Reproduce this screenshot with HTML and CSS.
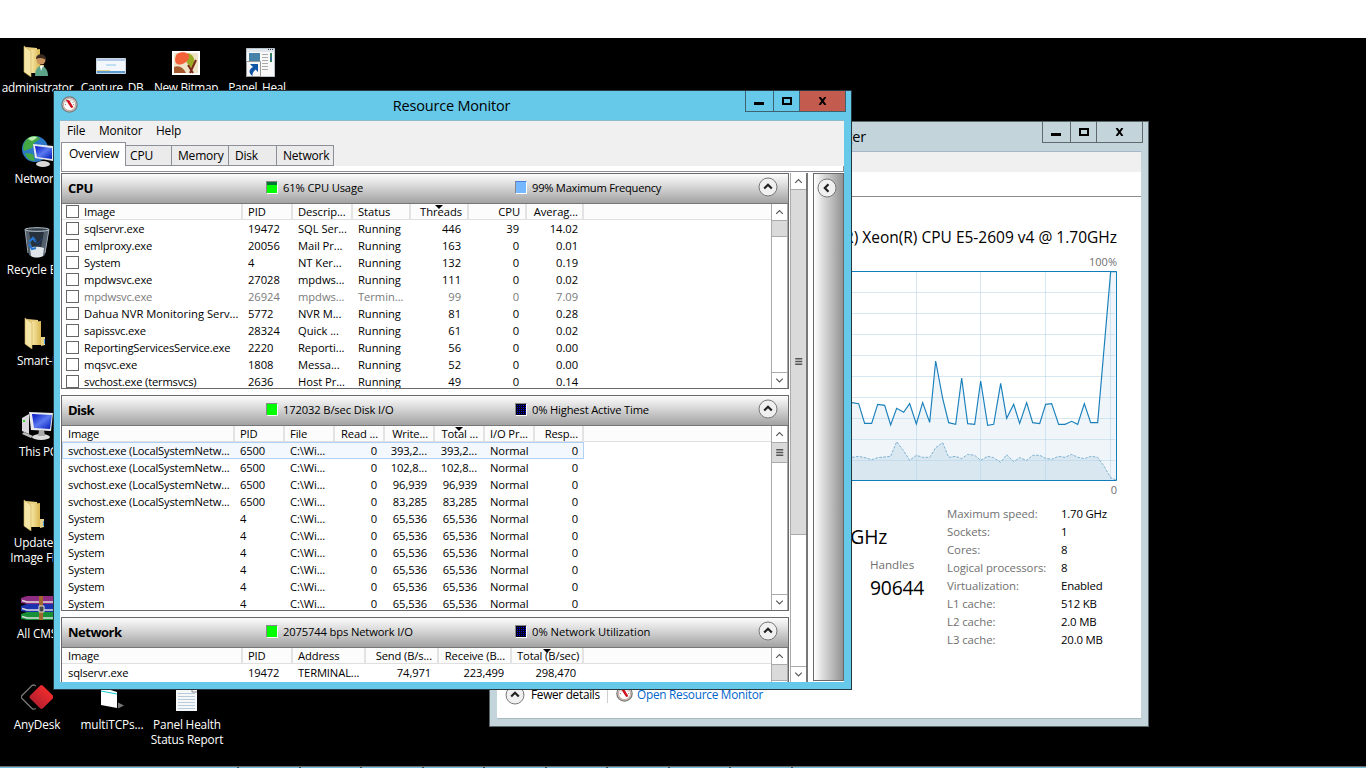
FILE: index.html
```html
<!DOCTYPE html>
<html lang="en">
<head>
<meta charset="utf-8">
<title>Resource Monitor</title>
<link rel="stylesheet" href="styles.css">
</head>
<body>
<svg width="0" height="0" class="defs">
  <defs>
    <linearGradient id="gold" x1="0" x2="1"><stop offset="0" stop-color="#f7e7a6"/><stop offset="1" stop-color="#d9b752"/></linearGradient>
    <linearGradient id="scr" x1="0" y1="0" x2="1" y2="1"><stop offset="0" stop-color="#0010c0"/><stop offset=".5" stop-color="#5a7af0"/><stop offset="1" stop-color="#0018b8"/></linearGradient>
    <linearGradient id="red" x1="0" y1="0" x2="0" y2="1"><stop offset="0" stop-color="#ef2b2d"/><stop offset="1" stop-color="#b8202e"/></linearGradient>
    <symbol id="folder" viewBox="0 0 32 32"><path d="M7 2l11 1 1 22-8 3z" fill="#e9cf7e"/><path d="M12 5l9-1v24h-9z" fill="url(#gold)"/><path d="M2 1l7 5v26l-7-5z" transform="translate(3)" fill="#f5e6a8" stroke="#c9a94e" stroke-width=".6"/><path d="M21 20h4v8l-4 1z" fill="#e6cf86"/><path d="M24.500 22v5" stroke="#4fa0d8"/></symbol>
    <symbol id="gauge" viewBox="0 0 16 16"><circle cx="8" cy="8" r="7.200" fill="#ddd" stroke="#777" stroke-width="1.200"/><circle cx="8" cy="8" r="5.700" fill="#fff" stroke="#c5a99c" stroke-width="1"/><path d="M4 8.500l.8-3L8 4l3.200 1.500.8 3" fill="none" stroke="#888" stroke-dasharray="1 1.500"/><path d="M4.500 3.500l3.200.5 4 6.500-2.200.8z" fill="#d0101a"/></symbol>
    <symbol id="roundUp" viewBox="0 0 20 20"><circle cx="10" cy="10" r="9" fill="#f0f0f0" stroke="#777"/><path d="M6.200 11.500L10 7.800l3.800 3.700" fill="none" stroke="#222" stroke-width="2.200"/></symbol>
    <symbol id="up" viewBox="0 0 16 16"><path d="M4.500 10L8 6.500l3.500 3.500" fill="none" stroke="#555" stroke-width="1.200"/></symbol>
    <symbol id="down" viewBox="0 0 16 16"><path d="M4.500 6L8 9.500 11.500 6" fill="none" stroke="#555" stroke-width="1.200"/></symbol>
    <symbol id="grip" viewBox="0 0 16 16"><path d="M4.500 4.500h7.500M4.500 7.500h7.500M4.500 10.500h7.500" stroke="#555" stroke-width="1.600"/></symbol>
  </defs>
</svg>
<div class="desktop">
  <div class="shortcut s-admin"><svg viewBox="0 0 32 32"><use href="#folder"/><circle cx="22" cy="15" r="4.500" fill="#c9945e"/><path d="M17 14c0-7 11-6 10 1-3-2-6-3-10-1z" fill="#3b2a20"/><path d="M16 31c0-7 3-10 6-10s7 3 7 10z" fill="#5da58a"/><path d="M21 21l1 5 2-5z" fill="#fff"/></svg><span>administrator</span></div>
  <div class="shortcut s-cap"><svg viewBox="0 0 32 32"><path fill="#f3f7fb" stroke="#c9d5e0" d="M1.500 11.500h29v15h-29z"/><path fill="#b4c8e8" d="M2 12h28v2H2z"/><path fill="#bfe0f0" d="M11 17h10v2H11z"/><path fill="#5b9bd0" d="M2 24h28v2H2z"/><path fill="#e8d58c" d="M2 23h13v1H2z"/></svg><span>Capture_DB</span></div>
  <div class="shortcut s-bmp"><svg viewBox="0 0 32 32"><path fill="#fff" d="M2 4h28v24H2z"/><path fill="#efe3c8" d="M4 6h24v20H4z"/><path fill="#a5592f" d="M4 26V20c5-2 9 0 12 6z"/><path fill="#9cab25" d="M18 6c6 2 9 9 4 15-3-2-6-6-6-8z"/><path fill="#f4623a" d="M7 7c4-3 13-2 12 3-1 6-9 9-12 7-3-2-2-8 0-10z"/><path fill="none" stroke="#7a2a18" stroke-width="2" d="M26 13l-6 13M18 18l5 8"/></svg><span>New Bitmap</span></div>
  <div class="shortcut s-panel"><svg viewBox="0 0 32 32"><path fill="#f8f8f8" stroke="#b9c3cc" d="M2.500 1.500h28v28h-28z"/><path fill="#dfe6ec" d="M3 2h27v3H3z"/><path fill="#334" d="M24 2h1v1h-1zM26 2h1v1h-1zM28 2h1v1h-1z"/><path fill="#4682a8" d="M5 6h11v8H5z"/><path stroke="#aaa" d="M18 7.500h6M18 10.500h6M18 13.500h6M18 16.500h6M18 19.500h6M18 22.500h6"/><path fill="#33805c" d="M26 6h2v9h-2z"/><path fill="#3566a0" d="M26 10h2v3h-2z"/><path fill="#f6f6f6" stroke="#999" d="M2.500 14.500h14v15h-14z"/><path fill="#0e55a5" d="M6 17h8v8l-2.500-2.500C9 25 8.500 26 8.500 29 4 26 5 22 9 20z"/></svg><span>Panel_Heal</span></div>
  <div class="shortcut s-net"><svg viewBox="0 0 32 32"><circle cx="14" cy="14" r="13" fill="#2b78c8"/><path d="M5 5c5-6 13-4 14-1l-6 4-2 5-8 3c-2-4 0-8 2-11zM4 18l8 1 2 7c-5 0-9-3-10-8z" fill="#43a843"/><path d="M7 4c3-3 8-3 9-1l-5 3z" fill="#bcebb0"/><path d="M12 9l20 2v15l-18-3z" fill="#e8e8ee"/><path d="M14 11l17 2v11l-15-2z" fill="url(#scr)"/><ellipse cx="22" cy="29" rx="7" ry="3" fill="#d8d8d8"/></svg><span>Network</span></div>
  <div class="shortcut s-bin"><svg viewBox="0 0 32 32"><path d="M5 3h24l-4 26c-4 3-12 3-16 0z" fill="#53606b"/><path d="M9 6h15l-3 16H12z" fill="#26313d"/><path d="M10 22c4-2 10-1 14 0l-1 8c-4 2-9 2-12 0z" fill="#dfe4e8"/><path d="M5 3l3 24M29 3l-4 24" stroke="#9daab4" fill="none"/><ellipse cx="17" cy="3.500" rx="12" ry="1.800" fill="#313d48" stroke="#bac6ce"/><path d="M9 16l4-4 3 4M9 18l3 5 4-1" stroke="#2476d0" stroke-width="2.200" fill="none"/><path d="M17 18l6-6M15 14l5 6" stroke="#1b3f78" fill="none"/></svg><span>Recycle Bin</span></div>
  <div class="shortcut s-smart"><svg><use href="#folder"/></svg><span>Smart-P</span></div>
  <div class="shortcut s-pc"><svg viewBox="0 0 32 32"><path d="M1 7l7-4v20l-7-3z" fill="#d9d9de"/><path d="M2 9h2v2H2z" fill="#3bd42b"/><path d="M8 1l24 1-2 18-20-1z" fill="#e9e9ef"/><path d="M11 3l20 1-2 14-16-1z" fill="url(#scr)"/><ellipse cx="20" cy="26" rx="9" ry="3" fill="#dcdcdc"/><path d="M18 19h5l1 6h-7z" fill="#aaa"/><path d="M3 21l9 4-2 2-9-4z" fill="#bbb"/></svg><span>This PC</span></div>
  <div class="shortcut s-upd"><svg><use href="#folder"/></svg><span>Updated<br>Image File</span></div>
  <div class="shortcut s-rar"><svg viewBox="0 0 32 32"><path d="M0 4l6-2h26v8H6l-6-1z" fill="#8f2d82"/><path d="M0 12l6-2h26v8H6l-6-1z" fill="#1c33b0"/><path d="M0 20l6-2h26v8H6l-6-1z" fill="#189038"/><path d="M1 6.500l5 1.500h26M1 14.500l5 1.500h26M1 22.500l5 1.500h26" fill="none" stroke="#ddd" stroke-width="1.500"/><path d="M18 2h4v24h-4z" fill="#a0682e"/><path d="M18 12h5v6h-5z" fill="#444" stroke="#ddd"/></svg><span>All CMS</span></div>
  <div class="shortcut s-any"><svg viewBox="0 0 32 32"><path d="M15 5l-2-1c-1 0-1.500 0-2 .5L1 14.500c-1 1-1 2 0 3l10 10c1 1 2 1 4 0" fill="none" stroke="#777" stroke-width="1.300"/><rect x="11.500" y="7" width="18" height="18" rx="2" transform="rotate(45 20.500 16)" fill="url(#red)"/></svg><span>AnyDesk</span></div>
  <div class="shortcut s-tcp"><svg viewBox="0 0 32 32"><path d="M6 2l16 5v16L6 20z" fill="#fff"/><path d="M6 6l16 3" stroke="#11c8d0"/><path d="M23 17.500l6 3-6 3z" fill="#777"/></svg><span>multiTCPs...</span></div>
  <div class="shortcut s-rep"><svg viewBox="0 0 32 32"><path d="M6 1h17l4 4v22H6z" fill="#f5f7f8"/><path d="M22 4v4h5" stroke="#888" fill="none"/><path d="M8 9.500h17M8 12.500h17M8 15.500h17M8 18.500h17M8 21.500h17M8 24.500h17" stroke="#b7cbda"/></svg><span>Panel Health<br>Status Report</span></div>

  <section class="window task-manager">
    <header class="titlebar"><h1>Task Manager</h1>
      <div class="controls"><b class="min"><i></i></b><b class="max"><i></i></b><b class="close"><svg viewBox="0 0 9 8"><path d="M1.500 0l6 8M7.500 0l-6 8" stroke="#000" stroke-width="2"/></svg></b></div></header>
    <div class="tm-body">
      <div class="tm-menu"></div><div class="tm-tabs"></div>
      <div class="tm-main">
        <div class="cpu-name">Intel(R) Xeon(R) CPU E5-2609 v4 @ 1.70GHz</div>
        <div class="axis top">100%</div>
        <svg class="chart" viewBox="21 -57 795 630">
          <path fill="#fff" d="M21-57h795v630H21z"/>
          <path fill="#f0f5fa" d="M21 338 41 341 59 400 80 400 98 343 119 346 137 405 155 355 176 367 194 341 214 402 233 338 254 397 272 213 293 325 311 398 332 403 350 264 368 401 389 403 407 273 428 406 446 403 467 280 485 385 506 343 524 400 545 338 563 398 584 401 602 343 620 341 641 403 660 403 680 394 698 403 718 341 737 398 758 398 797-55 814-55V571H21z"/>
          <path fill="#d9e7f0" d="M21 502 41 499 60 503 80 509 98 503 137 499 155 455 175 481 194 511 214 496 233 502 254 502 272 473 293 458 311 502 332 499 350 506 368 493 389 496 407 511 428 499 446 503 467 517 485 494 506 515 524 503 545 511 563 496 584 496 602 505 620 508 641 499 660 502 680 493 698 502 718 506 737 499 758 502 776 527 797 563 814 570H21z"/>
          <path fill="none" stroke="#b0d2e8" stroke-opacity=".5" stroke-width="3" d="M214.500-57v628M406.500-57v628M601.500-57v628M796.500-57v628M21 7.500h790M21 70.500h790M21 133.500h790M21 196.500h790M21 259.500h790M21 322.500h790M21 385.500h790M21 448.500h790M21 511.500h790"/>
          <path fill="none" stroke="#7fb3d2" stroke-width="3" stroke-dasharray="8 4" d="M21 502 41 499 60 503 80 509 98 503 137 499 155 455 175 481 194 511 214 496 233 502 254 502 272 473 293 458 311 502 332 499 350 506 368 493 389 496 407 511 428 499 446 503 467 517 485 494 506 515 524 503 545 511 563 496 584 496 602 505 620 508 641 499 660 502 680 493 698 502 718 506 737 499 758 502 776 527 797 563 814 570"/>
          <path fill="none" stroke="#1a80bb" stroke-width="3.500" d="M21 338 41 341 59 400 80 400 98 343 119 346 137 405 155 355 176 367 194 341 214 402 233 338 254 397 272 213 293 325 311 398 332 403 350 264 368 401 389 403 407 273 428 406 446 403 467 280 485 385 506 343 524 400 545 338 563 398 584 401 602 343 620 341 641 403 660 403 680 394 698 403 718 341 737 398 758 398 797-55 814-55"/>
          <path fill="none" stroke="#117dbb" stroke-width="3" d="M21-55.500h793.500v627H21"/>
        </svg>
        <div class="axis bottom">0</div>
        <div class="stats">
          <div class="usage"><div class="big speed">1.64 GHz</div><div class="label">Handles</div><div class="big">90644</div></div>
          <dl><dt>Maximum speed:</dt><dd>1.70 GHz</dd><dt>Sockets:</dt><dd>1</dd><dt>Cores:</dt><dd>8</dd><dt>Logical processors:</dt><dd>8</dd><dt>Virtualization:</dt><dd>Enabled</dd><dt>L1 cache:</dt><dd>512 KB</dd><dt>L2 cache:</dt><dd>2.0 MB</dd><dt>L3 cache:</dt><dd>20.0 MB</dd></dl>
        </div>
      </div>
      <footer><svg class="fewer"><use href="#roundUp"/></svg><span class="fd">Fewer details</span><i></i><svg class="gauge"><use href="#gauge"/></svg><a>Open Resource Monitor</a></footer>
    </div>
  </section>

  <section class="window resource-monitor">
    <header class="titlebar"><svg class="gauge"><use href="#gauge"/></svg><h1>Resource Monitor</h1>
      <div class="controls"><b class="min"><i></i></b><b class="max"><i></i></b><b class="close"><svg viewBox="0 0 9 8"><path d="M1.500 0l6 8M7.500 0l-6 8" stroke="#000" stroke-width="2"/></svg></b></div></header>
    <div class="rm-body">
      <nav class="menu"><span class="m1">File</span><span class="m2">Monitor</span><span>Help</span></nav>
      <nav class="tabs"><span class="t1 active">Overview</span><span class="t2">CPU</span><span class="t3">Memory</span><span class="t4">Disk</span><span class="t5">Network</span></nav>
      <div class="tab-edge"></div>
      <div class="rm-main">
        <div class="panels">
          <section class="panel p-cpu">
            <header><h2>CPU</h2><span class="m green part"></span><span class="a">61% CPU Usage</span><span class="m freq"></span><span class="b">99% Maximum Frequency</span><svg class="chev"><use href="#roundUp"/></svg></header>
            <div class="table">
              <div class="rows">
                <div class="row head"><span><i class="cb"></i>Image</span><span>PID</span><span>Descrip...</span><span>Status</span><span class="sort">Threads</span><span>CPU</span><span>Averag...</span></div>
                <div class="row"><span><i class="cb"></i>sqlservr.exe</span><span>19472</span><span>SQL Ser...</span><span>Running</span><span>446</span><span>39</span><span>14.02</span></div>
                <div class="row"><span><i class="cb"></i>emlproxy.exe</span><span>20056</span><span>Mail Pr...</span><span>Running</span><span>163</span><span>0</span><span>0.01</span></div>
                <div class="row"><span><i class="cb"></i>System</span><span>4</span><span>NT Ker...</span><span>Running</span><span>132</span><span>0</span><span>0.19</span></div>
                <div class="row"><span><i class="cb"></i>mpdwsvc.exe</span><span>27028</span><span>mpdws...</span><span>Running</span><span>111</span><span>0</span><span>0.02</span></div>
                <div class="row ended"><span><i class="cb"></i>mpdwsvc.exe</span><span>26924</span><span>mpdws...</span><span>Termin...</span><span>99</span><span>0</span><span>7.09</span></div>
                <div class="row"><span class="wide"><i class="cb"></i>Dahua NVR Monitoring Serv...</span><span>5772</span><span>NVR M...</span><span>Running</span><span>81</span><span>0</span><span>0.28</span></div>
                <div class="row"><span><i class="cb"></i>sapissvc.exe</span><span>28324</span><span>Quick ...</span><span>Running</span><span>61</span><span>0</span><span>0.02</span></div>
                <div class="row"><span><i class="cb"></i>ReportingServicesService.exe</span><span>2220</span><span>Reporti...</span><span>Running</span><span>56</span><span>0</span><span>0.00</span></div>
                <div class="row"><span><i class="cb"></i>mqsvc.exe</span><span>1808</span><span>Messa...</span><span>Running</span><span>52</span><span>0</span><span>0.00</span></div>
                <div class="row"><span><i class="cb"></i>svchost.exe (termsvcs)</span><span>2636</span><span>Host Pr...</span><span>Running</span><span>49</span><span>0</span><span>0.14</span></div>
              </div>
              <div class="scroll"><svg><use href="#up"/></svg><div class="thumb"></div><svg class="dn"><use href="#down"/></svg></div>
            </div>
          </section>
          <section class="panel p-disk">
            <header><h2>Disk</h2><span class="m green"></span><span class="a">172032 B/sec Disk I/O</span><span class="m idle"></span><span class="b">0% Highest Active Time</span><svg class="chev"><use href="#roundUp"/></svg></header>
            <div class="table">
              <div class="rows">
                <div class="row head"><span>Image</span><span>PID</span><span>File</span><span>Read ...</span><span>Write...</span><span class="sort">Total ...</span><span>I/O Pr...</span><span>Resp...</span></div>
                <div class="row sel"><span>svchost.exe (LocalSystemNetw...</span><span>6500</span><span>C:\Wi...</span><span>0</span><span>393,2...</span><span>393,2...</span><span>Normal</span><span>0</span></div>
                <div class="row"><span>svchost.exe (LocalSystemNetw...</span><span>6500</span><span>C:\Wi...</span><span>0</span><span>102,8...</span><span>102,8...</span><span>Normal</span><span>0</span></div>
                <div class="row"><span>svchost.exe (LocalSystemNetw...</span><span>6500</span><span>C:\Wi...</span><span>0</span><span>96,939</span><span>96,939</span><span>Normal</span><span>0</span></div>
                <div class="row"><span>svchost.exe (LocalSystemNetw...</span><span>6500</span><span>C:\Wi...</span><span>0</span><span>83,285</span><span>83,285</span><span>Normal</span><span>0</span></div>
                <div class="row"><span>System</span><span>4</span><span>C:\Wi...</span><span>0</span><span>65,536</span><span>65,536</span><span>Normal</span><span>0</span></div>
                <div class="row"><span>System</span><span>4</span><span>C:\Wi...</span><span>0</span><span>65,536</span><span>65,536</span><span>Normal</span><span>0</span></div>
                <div class="row"><span>System</span><span>4</span><span>C:\Wi...</span><span>0</span><span>65,536</span><span>65,536</span><span>Normal</span><span>0</span></div>
                <div class="row"><span>System</span><span>4</span><span>C:\Wi...</span><span>0</span><span>65,536</span><span>65,536</span><span>Normal</span><span>0</span></div>
                <div class="row"><span>System</span><span>4</span><span>C:\Wi...</span><span>0</span><span>65,536</span><span>65,536</span><span>Normal</span><span>0</span></div>
                <div class="row"><span>System</span><span>4</span><span>C:\Wi...</span><span>0</span><span>65,536</span><span>65,536</span><span>Normal</span><span>0</span></div>
              </div>
              <div class="scroll"><svg><use href="#up"/></svg><div class="thumb tall"><svg><use href="#grip"/></svg></div><svg class="dn"><use href="#down"/></svg></div>
            </div>
          </section>
          <section class="panel p-net">
            <header><h2>Network</h2><span class="m green"></span><span class="a">2075744 bps Network I/O</span><span class="m idle"></span><span class="b n">0% Network Utilization</span><svg class="chev"><use href="#roundUp"/></svg></header>
            <div class="table">
              <div class="rows">
                <div class="row head"><span>Image</span><span>PID</span><span>Address</span><span>Send (B/s...</span><span>Receive (B...</span><span class="sort">Total (B/sec)</span></div>
                <div class="row"><span>sqlservr.exe</span><span>19472</span><span>TERMINAL...</span><span>74,971</span><span>223,499</span><span>298,470</span></div>
              </div>
              <div class="scroll"><svg><use href="#up"/></svg><div class="thumb"></div></div>
            </div>
          </section>
        </div>
        <div class="scroll outer"><svg><use href="#up"/></svg><div class="thumb"><svg><use href="#grip"/></svg></div><svg class="dn"><use href="#down"/></svg></div>
        <aside><svg><use href="#roundUp" transform="rotate(-90 10 10)"/></svg></aside>
      </div>
    </div>
  </section>
  <div class="taskbar"><i></i><i></i><i></i><i></i><i></i><i></i><i></i><i></i><i></i><i></i></div>
</div>
</body>
</html>
```
FILE: styles.css
```css
* { box-sizing: border-box; }
body { margin: 0; width: 1366px; height: 768px; overflow: hidden; background: #fff; padding-top: 38px;
  font-family: "Open Sans", "Noto Sans", sans-serif; font-size: 11px; color: #000; }
h1, h2, dl, dd { margin: 0; font-weight: normal; }
.defs { position: absolute; }
svg { display: block; flex: none; }
.desktop { position: relative; height: 730px; background: #000; overflow: hidden; }

/* desktop shortcuts */
.shortcut { position: absolute; width: 90px; display: flex; flex-direction: column; align-items: center; color: #fff; text-align: center; white-space: nowrap; font-size: 11.800px; line-height: 15px; letter-spacing: -.3px; }
.shortcut svg { width: 32px; height: 32px; margin-bottom: 10px; }
.s-admin { left: -8px; top: 7px; } .s-admin svg { margin-bottom: 3px; margin-left: -5px; }
.s-admin span { margin-left: 1px; }
.s-cap { left: 67px; top: 9px; } .s-cap svg, .s-bmp svg, .s-panel svg { margin-bottom: 1px; }
.s-cap svg { margin-left: -3px; }
.s-bmp { left: 141px; top: 9px; }
.s-panel { left: 212px; top: 9px; } .s-panel svg { margin-left: 5px; }
.s-net { left: -8px; top: 97px; } .s-net svg { margin-bottom: 4px; }
.s-bin { left: -8px; top: 188px; letter-spacing: -.1px; } .s-bin svg { margin-bottom: 4px; margin-left: -2px; }
.s-smart { left: -7px; top: 279px; } .s-smart svg, .s-upd svg { margin-bottom: 4px; margin-left: -5px; }
.s-pc { left: -7px; top: 373px; } .s-pc svg { margin-bottom: 1px; margin-left: -2px; }
.s-upd { left: -8px; top: 461px; letter-spacing: -.2px; }
.s-rar { left: -8px; top: 556px; letter-spacing: -.15px; } .s-rar svg { margin-bottom: 0; }
.s-any { left: -8px; top: 643px; letter-spacing: -.15px; } .s-any svg { margin-bottom: 4px; }
.s-tcp { left: 67px; top: 647px; letter-spacing: -.1px; } .s-tcp svg { margin-bottom: 0; margin-left: -2px; }
.s-rep { left: 142px; top: 646px; letter-spacing: -.17px; } .s-rep svg { margin-bottom: 1px; margin-left: -2px; }

/* window frame */
.window { position: absolute; border: 1px solid #27373f; }
.titlebar { height: 30px; display: flex; position: relative; }
.titlebar h1 { font-size: 14.500px; line-height: 29px; white-space: nowrap; letter-spacing: -.2px; }
.controls { position: absolute; right: 5px; top: 0; display: flex; height: 21px; border: 1px solid #3d6270; border-top: 0; }
.controls b { display: flex; align-items: center; justify-content: center; border-left: 1px solid #3d6270; }
.controls b:first-child { border-left: 0; }
.min { width: 27px; } .max { width: 26px; } .close { width: 46px; }
.min i { width: 10px; height: 3px; background: #000; margin: 4px 2px 0 0; }
.max i { width: 10px; height: 8px; border: 2px solid #000; }
.close svg { width: 9px; height: 8px; }

/* task manager */
.task-manager { left: 489px; top: 83px; width: 660px; height: 606px; background: #c3d5db; border-color: #5b666b; }
.task-manager h1 { margin-left: 284px; }
.task-manager .controls, .task-manager .controls b { border-color: #5f686d; }
.tm-body { margin: -1px 7px 0; height: 568px; background: #fff; border-bottom: 1px solid #a9b9bf; border-top: 1px solid #a9b5ca; display: flex; flex-direction: column; }
.tm-menu { height: 20px; background: #f0f0f0; }
.tm-tabs { height: 25px; border-bottom: 1px solid #8b8b8b; }
.tm-main { flex: 1; display: flex; flex-direction: column; align-items: flex-end; padding-right: 23px; }
.cpu-name { margin-top: 30px; margin-right: 1px; font-size: 15.500px; line-height: 20px; height: 21px; white-space: nowrap; }
.axis { color: #707070; line-height: 14px; height: 14px; margin-right: 1px; }
.axis.top { margin-top: 7px; margin-bottom: 2px; }
.axis.bottom { margin-top: 2px; }
.chart { width: 265px; height: 210px; margin-right: 1px; }
.stats { width: 343px; display: flex; height: 150px; margin-top: 8px; margin-right: -23px; }
.usage { width: 151px; padding-left: 72px; padding-top: 20px; }
.big { font-size: 19.300px; line-height: 24px; white-space: nowrap; letter-spacing: -.2px; }
.speed { margin-left: -57px; width: 74px; display: flex; justify-content: flex-end; }
.label { color: #707070; line-height: 16px; margin: 8px 0 3px; font-size: 11.600px; }
.stats dl { display: grid; grid-template-columns: 114px 80px; grid-auto-rows: 18px; line-height: 18px; font-size: 11.400px; white-space: nowrap; }
.stats dt { color: #707070; letter-spacing: -.07px; }
.stats dd { letter-spacing: -.2px; }
.tm-body footer { height: 33px; display: flex; align-items: flex-start; padding-left: 8px; font-size: 11.800px; line-height: 19px; letter-spacing: -.28px; }
.fewer { width: 20px; height: 20px; } .fd { margin-left: 6px; width: 70px; white-space: nowrap; }
footer i { width: 1px; height: 18px; background: #d0d0d0; margin: 0 8px 0 6px; }
.gauge { width: 17px; height: 17px; }
footer a { color: #0066cc; margin-left: 4px; white-space: nowrap; letter-spacing: -.25px; }

/* resource monitor */
.resource-monitor { left: 53px; top: 52px; width: 799px; height: 600px; background: #66c9ea; }
.resource-monitor .titlebar { height: 29px; }
.resource-monitor h1 { width: 100%; text-align: center; margin-right: 2px; }
.resource-monitor .titlebar > .gauge { position: absolute; left: 7px; top: 5px; }
.resource-monitor .close { background: #c45b4f; }
.rm-body { margin: 0 7px 0 6px; height: 562px; background: #fff; overflow: hidden; display: flex; flex-direction: column; border-top: 1px solid #8fb9cc; }
.menu { height: 21px; background: #f0f0f0; display: flex; padding-left: 7px; font-size: 11.900px; line-height: 19px; letter-spacing: -.15px; flex: none; }
.m1 { width: 32px; } .m2 { width: 57px; }
.tabs { height: 24px; background: #f0f0f0; display: flex; align-items: flex-end; padding-left: 1px; font-size: 12px; flex: none; }
.tabs span { height: 21px; line-height: 20px; border: 1px solid #8c8e98; border-left: 0; background: #ebebeb; padding-left: 4px; letter-spacing: -.15px; }
.tabs .active { height: 24px; background: #fff; border-left: 1px solid #8c8e98; border-bottom: 0; padding-left: 7px; line-height: 21px; letter-spacing: -.25px; }
.tabs .t3, .tabs .t4, .tabs .t5 { padding-left: 6px; letter-spacing: -.2px; }
.t1 { width: 65px; } .t2 { width: 46px; } .t3 { width: 57px; } .t4 { width: 48px; } .t5 { width: 57px; }
.tab-edge { height: 6px; border: 1px solid #8c8e98; border-top: 0; margin-left: 1px; background: #fff; flex: none; }
.rm-main { display: flex; height: 510px; padding: 1px 0 0 1px; }
.panels { width: 728px; height: 509px; flex: none; overflow: hidden; }
.panel { border: 1px solid #696969; margin-bottom: 6px; display: flex; flex-direction: column; }
.p-cpu, .p-disk { height: 216px; } .p-net { height: 90px; }
.panel header { height: 30px; flex: none; display: flex; align-items: center; position: relative; background: linear-gradient(#fcfcfc, #e3e3e3 30%, #a2a2a2); border-bottom: 1px solid #777; padding: 0 0 2px 6px; font-size: 11.200px; letter-spacing: -.14px; }
.panel h2 { font-size: 13px; font-weight: bold; width: 198px; letter-spacing: -.5px; }
.m { width: 12px; height: 13px; border: 1px solid #888; border-color: #888 #fff #fff #888; margin: 0 5px 0 0; }
.green { background-color: #0f0; }
.part { background-image: linear-gradient(#073 3px, transparent 3px); }
.freq { background: #75b8ff; border-top-color: #4d7fdc; }
.idle { background: linear-gradient(#000030, #000030); }
.idle { background: radial-gradient(circle at .5px .5px, #0000e0 .6px, #000010 .7px) 1px 1px / 2px 2px; }
.a { width: 232px; white-space: nowrap; }
.b { letter-spacing: -.27px; }
.p-disk .b { letter-spacing: -.17px; } .p-net .b { letter-spacing: 0; }
.chev { position: absolute; right: 10px; top: 3px; width: 20px; height: 20px; }
.table { display: flex; flex: 1; min-height: 0; overflow: hidden; }
.rows { flex: 1; overflow: hidden; }
.row { display: grid; height: 17px; line-height: 17px; white-space: nowrap; width: 522px; font-size: 11.200px; letter-spacing: -.05px; }
.row span { padding: 0 8px 0 5px; overflow: hidden; }
.row span:nth-child(n+7) { padding-right: 6px; }
.row span:first-child { padding-left: 6px; padding-right: 0; letter-spacing: -.2px; }
.row .wide:first-child { letter-spacing: .02px; }
.row.head { width: 100%; height: 16px; line-height: 16px; border-bottom: 1px solid #e0e0e0; background: #fcfcfc; }
.row.head span { border-right: 2px solid #e3e3e3; padding-right: 5px; }
.row.head span:nth-child(n+7) { padding-right: 4px; }
.p-cpu .row { grid-template-columns: 181px 50px 60px 58px 58px 58px 57px; }
.p-disk .row { grid-template-columns: 173px 50px 50px 50px 50px 50px 50px 49px; letter-spacing: -.12px; }
.p-net .row { grid-template-columns: 181px 50px 73px 73px 73px 72px; letter-spacing: -.12px; }
.p-cpu .row span:nth-child(n+5), .p-disk .row span:nth-child(8), .p-disk .row span:nth-child(n+4):nth-child(-n+6), .p-net .row span:nth-child(n+4) { text-align: right; }
.p-cpu .row span:first-child { padding-left: 4px; display: flex; }
.cb { width: 13px; height: 13px; border: 1px solid #666; background: #fff; margin: 2px 5px 0 0; flex: none; }
.head .cb { margin-top: 1px; }
.ended { color: #7a7a7a; }
.sel { background: #f3f8ff; box-shadow: inset 0 0 0 1px #b0d0f5; }
.sort { position: relative; }
.sort::before { content: ""; position: absolute; left: calc(50% - 4px); top: 1px; border: 4px solid transparent; border-top-color: #000; border-bottom: 0; }
.scroll { width: 17px; background: #fff; border: 1px solid #aaa; border-width: 0 1px; display: flex; flex-direction: column; flex: none; }
.scroll svg { width: 15px; height: 16px; }
.thumb { height: 17px; background: #dadada; border: 1px solid #aaa; border-width: 1px 0; display: flex; align-items: center; }
.thumb.tall { height: 21px; }
.dn { margin-top: auto; border-top: 1px solid #aaa; }
.outer { margin-left: 1px; width: 18px; height: 509px; border-right: 2px solid #777; }
.outer .thumb { height: 346px; }
aside { margin-left: 5px; width: 31px; height: 508px; border: 1px solid #696969; background: linear-gradient(90deg, #fff, #ddd 30%, #929292); padding: 4px 0 0 3px; }
aside svg { width: 20px; height: 20px; }

/* taskbar edge */
.taskbar { position: absolute; left: 0; right: 0; bottom: 0; height: 2px; background: #70bddd; border-top: 1px solid #6c6c6c; display: flex; padding-left: 237px; }
.taskbar i { width: 61.500px; border-left: 2px solid #31505d; }
```
